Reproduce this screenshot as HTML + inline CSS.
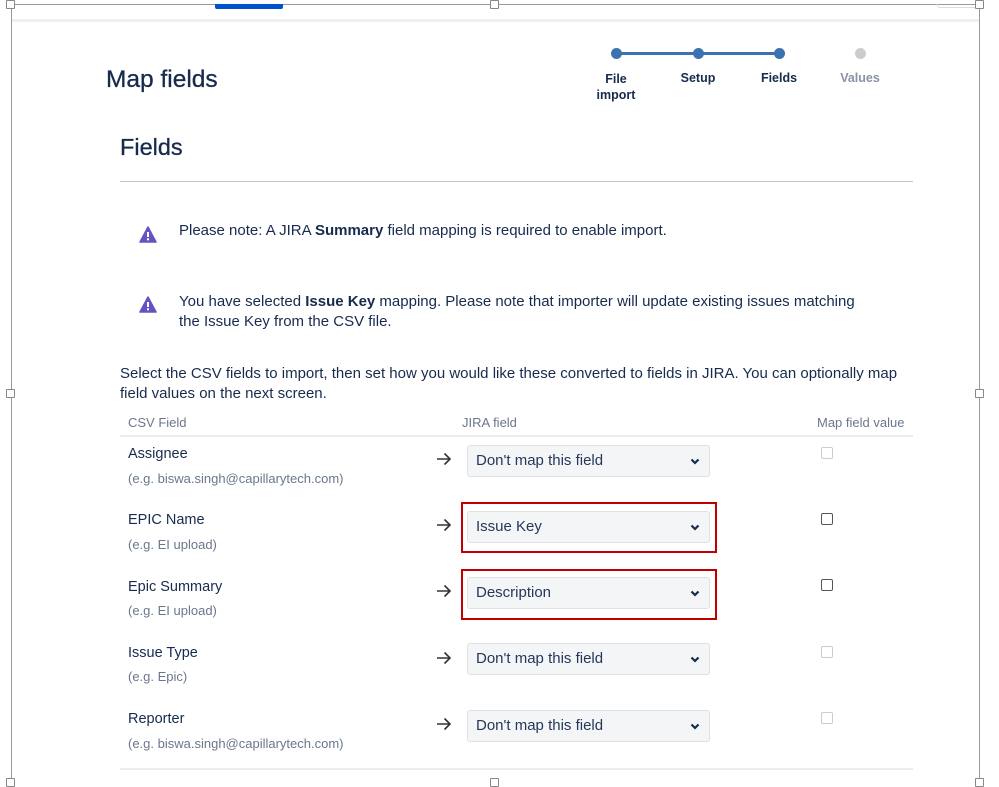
<!DOCTYPE html>
<html><head><meta charset="utf-8"><style>
*{margin:0;padding:0;box-sizing:border-box}
body{width:999px;height:783px;position:relative;background:#fff;font-family:"Liberation Sans",sans-serif;overflow:hidden;color:#172b4d}
.a{position:absolute}
.h{position:absolute;width:9px;height:9px;border:1px solid #888;background:#fff;border-radius:1px}
.lbl{font-size:14.5px;color:#172b4d}
.sub{font-size:13px;color:#6b778c}
.sel{position:absolute;left:467px;width:243px;height:32px;background:#f4f5f7;border:1px solid #dfe1e6;border-radius:3px;font-size:15px;color:#253858;padding:6px 0 0 8px}
.sel svg{position:absolute;right:9px;top:12px}
.arr{position:absolute;left:436px}
.cb{position:absolute;left:821px;width:12px;height:12px;border:1.3px solid #555;border-radius:2px}
.cb.d{border-color:#ccc}
.red{position:absolute;left:461px;width:256px;height:51px;border:2.5px solid #c00000}
.st{position:absolute;font-size:12.5px;font-weight:bold;text-align:center;width:70px}
</style></head><body>
<div class="a" style="left:11px;top:4px;width:968px;height:1px;background:#999"></div>
<div class="a" style="left:11px;top:4px;width:1px;height:779px;background:#999"></div>
<div class="a" style="left:979px;top:4px;width:1px;height:779px;background:#999"></div>
<div class="a" style="left:12px;top:19px;width:967px;height:3px;background:#eeeff2"></div>
<div class="a" style="left:215px;top:4px;width:68px;height:5px;background:#0052cc;border-radius:0 0 2px 2px"></div>
<div class="a" style="left:937px;top:4px;width:42px;height:4px;border:1px solid #ddd;border-top:none;border-radius:0 0 3px 3px"></div>
<div class="h" style="left:6px;top:0"></div><div class="h" style="left:490px;top:0"></div><div class="h" style="left:975px;top:0"></div>
<div class="h" style="left:6px;top:389px"></div><div class="h" style="left:975px;top:389px"></div>
<div class="h" style="left:6px;top:778px"></div><div class="h" style="left:490px;top:778px"></div><div class="h" style="left:975px;top:778px"></div>

<div class="a" style="left:106px;top:66px;font-size:24.5px;color:#172b4d;-webkit-text-stroke:0.3px #172b4d">Map fields</div>
<div class="a" style="left:617px;top:52px;width:163px;height:3px;background:#3b73af"></div>
<div class="a" style="left:611px;top:48px;width:11px;height:11px;border-radius:50%;background:#3b73af"></div>
<div class="a" style="left:693px;top:48px;width:11px;height:11px;border-radius:50%;background:#3b73af"></div>
<div class="a" style="left:774px;top:48px;width:11px;height:11px;border-radius:50%;background:#3b73af"></div>
<div class="a" style="left:855px;top:48px;width:11px;height:11px;border-radius:50%;background:#ccc"></div>
<div class="st" style="left:581px;top:71px;line-height:16px;color:#172b4d">File<br>import</div>
<div class="st" style="left:663px;top:71px;color:#172b4d">Setup</div>
<div class="st" style="left:744px;top:71px;color:#172b4d">Fields</div>
<div class="st" style="left:825px;top:71px;color:#8993a4">Values</div>

<div class="a" style="left:120px;top:134px;font-size:23.5px;color:#172b4d;-webkit-text-stroke:0.3px #172b4d">Fields</div>
<div class="a" style="left:120px;top:181px;width:793px;height:1px;background:#c1c7d0"></div>

<svg class="a" style="left:139px;top:226px" width="18" height="17" viewBox="0 0 18 17"><path d="M9 1 L17 16 L1 16 Z" fill="#6554c0" stroke="#6554c0" stroke-linejoin="round" stroke-width="1.5"/><rect x="8" y="6" width="2" height="5" fill="#fff"/><rect x="8" y="12.3" width="2" height="2" fill="#fff"/></svg>
<div class="a" style="left:179px;top:222px;font-size:15px;color:#172b4d">Please note: A JIRA <b>Summary</b> field mapping is required to enable import.</div>
<svg class="a" style="left:139px;top:296px" width="18" height="17" viewBox="0 0 18 17"><path d="M9 1 L17 16 L1 16 Z" fill="#6554c0" stroke="#6554c0" stroke-linejoin="round" stroke-width="1.5"/><rect x="8" y="6" width="2" height="5" fill="#fff"/><rect x="8" y="12.3" width="2" height="2" fill="#fff"/></svg>
<div class="a" style="left:179px;top:292px;font-size:15px;line-height:20px;color:#172b4d;width:760px">You have selected <b>Issue Key</b> mapping. Please note that importer will update existing issues matching<br>the Issue Key from the CSV file.</div>

<div class="a" style="left:120px;top:364px;font-size:15px;line-height:20px;color:#172b4d;width:850px">Select the CSV fields to import, then set how you would like these converted to fields in JIRA. You can optionally map<br>field values on the next screen.</div>
<div class="a" style="left:128px;top:415px;font-size:13px;color:#6b778c">CSV Field</div>
<div class="a" style="left:462px;top:415px;font-size:13px;color:#6b778c">JIRA field</div>
<div class="a" style="left:817px;top:415px;font-size:13px;color:#6b778c">Map field value</div>
<div class="a" style="left:120px;top:435px;width:793px;height:2px;background:#ebecf0"></div>

<div class="a lbl" style="left:128px;top:446px">Assignee</div><div class="a sub" style="left:128px;top:471px">(e.g. biswa.singh@capillarytech.com)</div>
<div class="a lbl" style="left:128px;top:512px">EPIC Name</div><div class="a sub" style="left:128px;top:537px">(e.g. EI upload)</div>
<div class="a lbl" style="left:128px;top:579px">Epic Summary</div><div class="a sub" style="left:128px;top:603px">(e.g. EI upload)</div>
<div class="a lbl" style="left:128px;top:645px">Issue Type</div><div class="a sub" style="left:128px;top:669px">(e.g. Epic)</div>
<div class="a lbl" style="left:128px;top:711px">Reporter</div><div class="a sub" style="left:128px;top:736px">(e.g. biswa.singh@capillarytech.com)</div>

<svg class="arr" style="top:452px" width="16" height="14" viewBox="0 0 16 14"><path d="M1 7 H14 M8.5 1.5 L14 7 L8.5 12.5" stroke="#333" stroke-width="1.6" fill="none"/></svg>
<svg class="arr" style="top:518px" width="16" height="14" viewBox="0 0 16 14"><path d="M1 7 H14 M8.5 1.5 L14 7 L8.5 12.5" stroke="#333" stroke-width="1.6" fill="none"/></svg>
<svg class="arr" style="top:584px" width="16" height="14" viewBox="0 0 16 14"><path d="M1 7 H14 M8.5 1.5 L14 7 L8.5 12.5" stroke="#333" stroke-width="1.6" fill="none"/></svg>
<svg class="arr" style="top:651px" width="16" height="14" viewBox="0 0 16 14"><path d="M1 7 H14 M8.5 1.5 L14 7 L8.5 12.5" stroke="#333" stroke-width="1.6" fill="none"/></svg>
<svg class="arr" style="top:717px" width="16" height="14" viewBox="0 0 16 14"><path d="M1 7 H14 M8.5 1.5 L14 7 L8.5 12.5" stroke="#333" stroke-width="1.6" fill="none"/></svg>

<div class="red" style="top:502px"></div>
<div class="red" style="top:569px"></div>
<div class="sel" style="top:445px">Don't map this field<svg width="10" height="7" viewBox="0 0 10 7"><path d="M1.5 1.5 L5 5 L8.5 1.5" stroke="#172b4d" stroke-width="2.2" fill="none"/></svg></div>
<div class="sel" style="top:511px">Issue Key<svg width="10" height="7" viewBox="0 0 10 7"><path d="M1.5 1.5 L5 5 L8.5 1.5" stroke="#172b4d" stroke-width="2.2" fill="none"/></svg></div>
<div class="sel" style="top:577px">Description<svg width="10" height="7" viewBox="0 0 10 7"><path d="M1.5 1.5 L5 5 L8.5 1.5" stroke="#172b4d" stroke-width="2.2" fill="none"/></svg></div>
<div class="sel" style="top:643px">Don't map this field<svg width="10" height="7" viewBox="0 0 10 7"><path d="M1.5 1.5 L5 5 L8.5 1.5" stroke="#172b4d" stroke-width="2.2" fill="none"/></svg></div>
<div class="sel" style="top:710px">Don't map this field<svg width="10" height="7" viewBox="0 0 10 7"><path d="M1.5 1.5 L5 5 L8.5 1.5" stroke="#172b4d" stroke-width="2.2" fill="none"/></svg></div>

<div class="cb d" style="top:447px"></div>
<div class="cb" style="top:513px"></div>
<div class="cb" style="top:579px"></div>
<div class="cb d" style="top:646px"></div>
<div class="cb d" style="top:712px"></div>

<div class="a" style="left:120px;top:768px;width:793px;height:2px;background:#ebecf0"></div>
</body></html>
